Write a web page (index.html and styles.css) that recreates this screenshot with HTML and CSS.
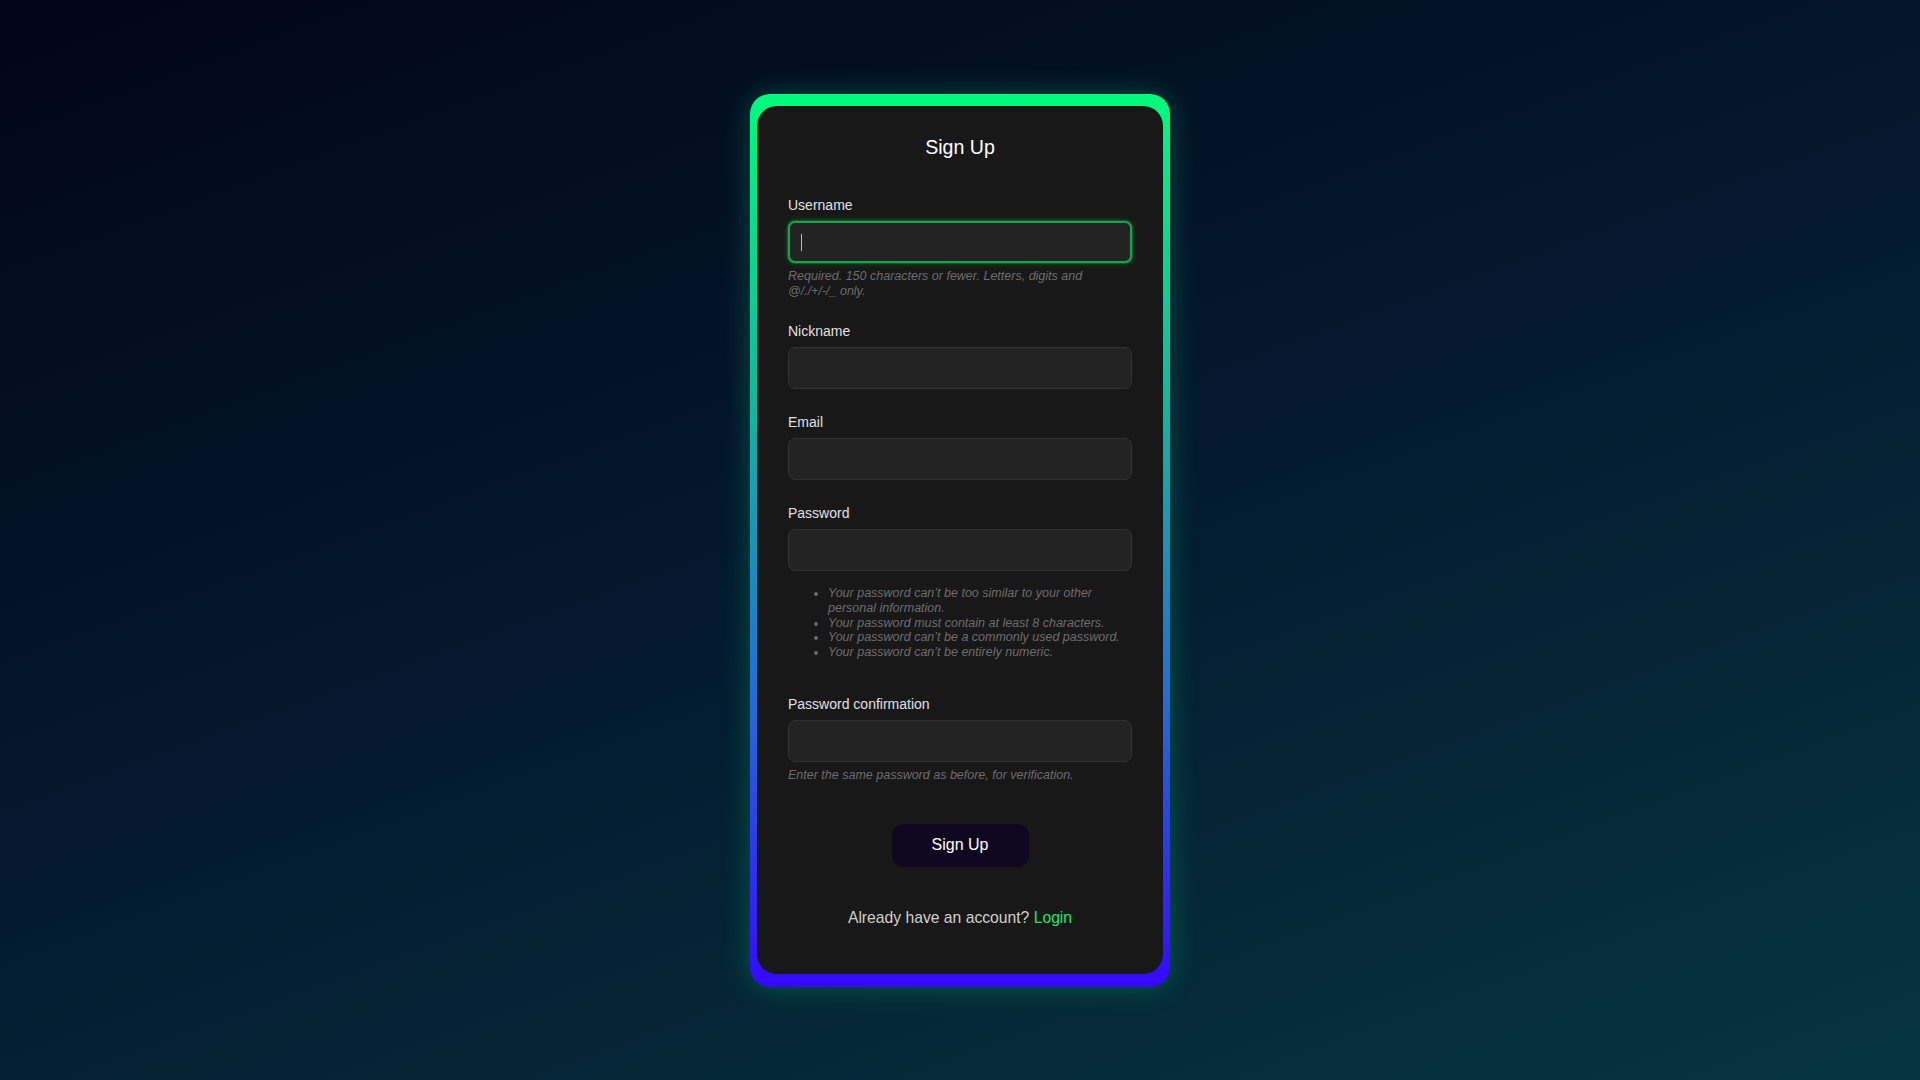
FILE: index.html
```html
<!DOCTYPE html><html lang="en"><head><meta charset="UTF-8"><meta name="viewport" content="width=device-width, initial-scale=1.0"><title>Sign Up</title><link rel="stylesheet" href="styles.css"></head><body>
<div class="frame">
  <div class="card">
    <h2 class="title">Sign Up</h2>
    <form onsubmit="return false">
      <div class="field">
        <label for="id_username">Username</label>
        <div class="input-wrap">
          <input id="id_username" type="text" class="focused">
          <span class="caret"></span>
        </div>
        <p class="help">Required. 150 characters or fewer. Letters, digits and @/./+/-/_ only.</p>
      </div>
      <div class="field">
        <label for="id_nickname">Nickname</label>
        <input id="id_nickname" type="text">
      </div>
      <div class="field">
        <label for="id_email">Email</label>
        <input id="id_email" type="email">
      </div>
      <div class="field">
        <label for="id_password1">Password</label>
        <input id="id_password1" type="password">
        <ul class="help-list">
          <li>Your password can’t be too similar to your other personal information.</li>
          <li>Your password must contain at least 8 characters.</li>
          <li>Your password can’t be a commonly used password.</li>
          <li>Your password can’t be entirely numeric.</li>
        </ul>
      </div>
      <div class="field">
        <label for="id_password2">Password confirmation</label>
        <input id="id_password2" type="password">
        <p class="help">Enter the same password as before, for verification.</p>
      </div>
      <div class="actions"><button type="submit">Sign Up</button></div>
    </form>
    <p class="switch">Already have an account? <a href="#">Login</a></p>
  </div>
</div>
</body></html>
```

FILE: styles.css
```css
html,body{margin:0;padding:0;}
body{min-height:100vh;font-family:"Liberation Sans",Arial,sans-serif;background:linear-gradient(160deg,#020519 0%,#041a2e 50%,#06353f 100%);color:#ddd;}
.frame{width:406px;margin:0 auto;margin-top:94px;padding:12px 7px 13px;border-radius:20px;background:linear-gradient(to bottom,#00fb7c 0%,#12b5a0 35%,#2566d8 70%,#3608ff 100%);box-shadow:0 0 28px rgba(0,230,140,0.28);}
.card{background:#181818;border-radius:20px;padding:30px 31px 47px;}
.title{margin:0 0 38px;text-align:center;font-size:19.6px;line-height:23px;font-weight:normal;color:#fff;}
form{margin:0;}
.field{margin-bottom:25px;}
.field label{display:block;font-size:14px;line-height:16px;color:#e0e0e0;margin-bottom:8px;}
.field input{display:block;box-sizing:border-box;width:100%;height:42px;padding:0 12px;background:#232323;border:1px solid #323232;border-radius:7px;color:#eee;font-size:14px;font-family:inherit;outline:none;}
.field input.focused,.field input:focus{border:2px solid #1aa24c;box-shadow:0 0 0 1px #0d5d2c,0 0 6px rgba(20,200,90,0.35);}
.input-wrap{position:relative;}
.caret{position:absolute;left:13px;top:50%;width:1px;height:17px;margin-top:-8px;background:#bbb;}
.help{margin:6px 0 0;font-size:12.5px;line-height:15px;font-style:italic;color:#6d6d6d;}
.field:first-child{margin-bottom:24px;}
.help-list{margin:15px 0 36px;padding-left:40px;font-size:12.5px;line-height:14.75px;font-style:italic;color:#6d6d6d;}
.actions{text-align:center;margin-top:41px;}
button{width:137px;height:43px;border:none;border-radius:12px;background:#0e0720;color:#fff;font-family:inherit;font-size:16px;cursor:pointer;}
.switch{margin:42px 0 0;text-align:center;font-size:15.7px;line-height:18px;color:#d0d0d0;}
.switch a{color:#19e66e;text-decoration:none;}
```
